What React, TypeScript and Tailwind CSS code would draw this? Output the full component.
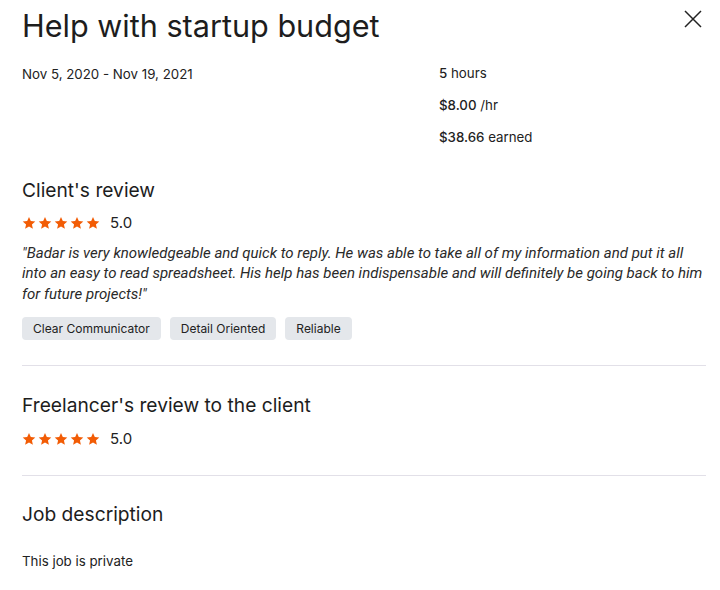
import React from "react";

const tags = ["Clear Communicator", "Detail Oriented", "Reliable"];

function Stars() {
  return (
    <div className="flex items-center">
      <div className="flex gap-[2px]">
        {[0, 1, 2, 3, 4].map((i) => (
          <svg key={i} width="14" height="14" viewBox="0 0 24 24" fill="#f25c05">
            <path d="M12 1.5l3.1 7.1 7.7.7-5.8 5.1 1.7 7.6L12 18l-6.7 4 1.7-7.6-5.8-5.1 7.7-.7z" />
          </svg>
        ))}
      </div>
      <span className="ml-[10px] text-[15px] text-[#222]">5.0</span>
    </div>
  );
}

export default function App() {
  return (
    <div className="w-[720px] h-[590px] bg-white text-[#1d1d1d] font-['Inter',sans-serif] relative pl-[22px] pr-[14px] pt-[8px]">
      <button className="absolute right-[18px] top-[10px] text-[#222]">
        <svg width="18" height="18" viewBox="0 0 18 18" stroke="currentColor" strokeWidth="1.5">
          <path d="M1 1l16 16M17 1L1 17" />
        </svg>
      </button>

      <h1 className="text-[30.6px] leading-[36px] font-normal">Help with startup budget</h1>

      <div className="flex mt-[21px] text-[13.3px] text-[#222]">
        <div className="w-[417px]">Nov 5, 2020 - Nov 19, 2021</div>
        <div className="flex flex-col gap-[15px] leading-[17px]">
          <div>
            <span className="font-medium">5</span> hours
          </div>
          <div>
            <span className="font-medium">$8.00</span> /hr
          </div>
          <div>
            <span className="font-medium">$38.66</span> earned
          </div>
        </div>
      </div>

      <h2 className="text-[19.2px] leading-[24px] mt-[32px]">Client's review</h2>
      <div className="mt-[10px]">
        <Stars />
      </div>
      <p className="mt-[8px] text-[15px] leading-[20.5px] italic text-[#2a2a2a] font-['Roboto',sans-serif]">
        "Badar is very knowledgeable and quick to reply. He was able to take all of my information and put it all
        into an easy to read spreadsheet. His help has been indispensable and will definitely be going back to him
        for future projects!"
      </p>
      <div className="flex gap-[9px] mt-[13px]">
        {tags.map((t) => (
          <span key={t} className="bg-[#e4e7eb] rounded-[4px] h-[23px] px-[11px] flex items-center text-[12px] text-[#222]">
            {t}
          </span>
        ))}
      </div>

      <div className="border-t border-[#e2e0e8] mt-[25px]" />

      <h2 className="text-[19.2px] leading-[24px] mt-[27px]">Freelancer's review to the client</h2>
      <div className="mt-[11px]">
        <Stars />
      </div>

      <div className="border-t border-[#e2e0e8] mt-[24px]" />

      <h2 className="text-[19.2px] leading-[24px] mt-[26px]">Job description</h2>
      <p className="text-[13.3px] mt-[26px] text-[#222]">This job is private</p>
    </div>
  );
}
